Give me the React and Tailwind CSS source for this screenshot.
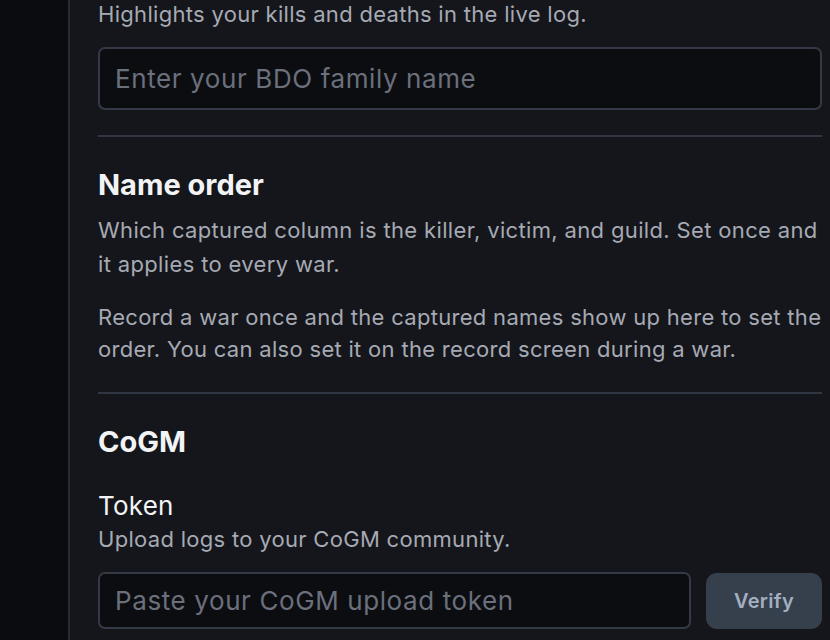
export default function App() {
  return (
    <div
      className="flex h-[640px] w-[830px] overflow-hidden bg-[#0b0c0f]"
      style={{ fontFamily: 'Inter, "Noto Sans", sans-serif' }}
    >
      <div className="w-[68px] shrink-0 bg-[#0b0c0f]" />
      <div className="w-[2px] shrink-0 bg-[#262b35]" />
      <div className="flex-1 bg-[#15161b] pl-[28px] pr-[8px]">
        <div className="w-[724px] -mt-[2px]">
          <p className="text-[22px] leading-[33px] tracking-[0.3px] text-[#a6aab4]">
            Highlights your kills and deaths in the live log.
          </p>
          <div className="mt-[16px] flex h-[63px] items-center rounded-[7px] border-2 border-[#333946] bg-[#0c0d11] px-[15px]">
            <span className="text-[26px] tracking-[0.6px] text-[#6b707c]">Enter your BDO family name</span>
          </div>
          <div className="mt-[25px] h-[2px] bg-[#303642]" />
          <h2 className="mt-[31px] text-[29px] font-bold leading-[34px] text-[#f2f3f5]">Name order</h2>
          <p className="mt-[11px] text-[22px] leading-[34px] tracking-[0.35px] text-[#a6aab4]">
            Which captured column is the killer, victim, and guild. Set once and it applies to every war.
          </p>
          <p className="mt-[20px] text-[22px] leading-[32px] tracking-[0.3px] text-[#a6aab4]">
            Record a war once and the captured names show up here to set the order. You can also set it on the record screen during a war.
          </p>
          <div className="mt-[27px] h-[2px] bg-[#303642]" />
          <h2 className="mt-[31px] text-[29px] font-bold leading-[34px] text-[#f2f3f5]">CoGM</h2>
          <h3 className="mt-[30px] text-[26px] leading-[34px] tracking-[0.2px] text-[#f2f3f5]">Token</h3>
          <p className="text-[22px] leading-[33px] tracking-[0.3px] text-[#a6aab4]">Upload logs to your CoGM community.</p>
          <div className="mt-[16px] flex items-center gap-[15px]">
            <div className="flex h-[57px] flex-1 items-center rounded-[7px] border-2 border-[#333946] bg-[#0c0d11] px-[15px]">
              <span className="text-[26px] tracking-[0.6px] text-[#6b707c]">Paste your CoGM upload token</span>
            </div>
            <button className="h-[56px] w-[116px] rounded-[11px] bg-[#363f4c] text-[20px] font-semibold tracking-[0.3px] text-[#a3afc0]">
              Verify
            </button>
          </div>
        </div>
      </div>
    </div>
  );
}
